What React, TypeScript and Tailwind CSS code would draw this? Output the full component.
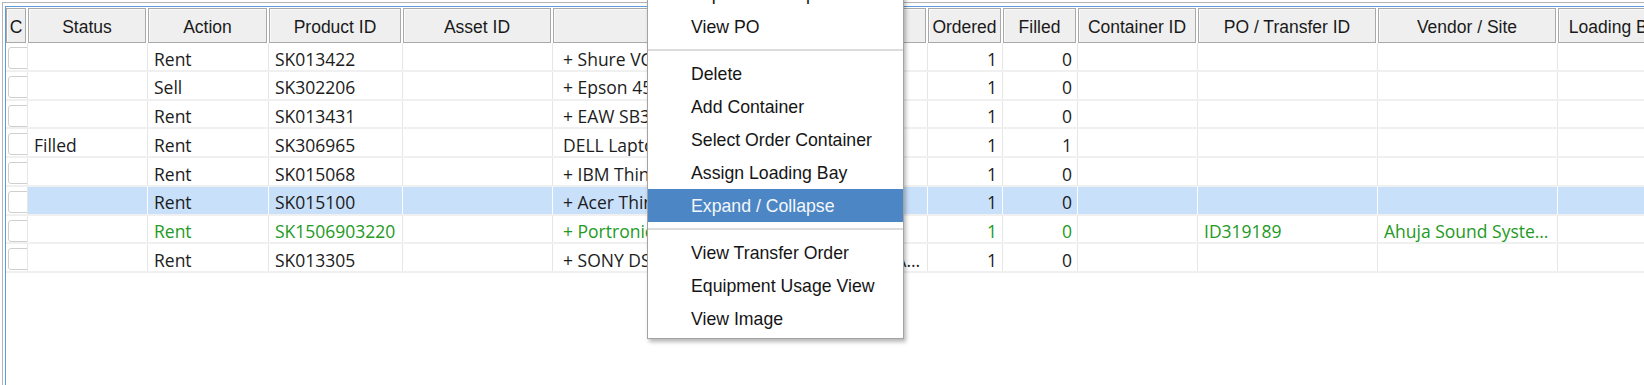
import React from "react";

interface Column {
  key: string;
  label: string;
  width: string;
  right?: boolean;
}

interface OrderRow {
  status?: string;
  action: string;
  product: string;
  description: string;
  descTail?: string;
  ordered: number;
  filled: number;
  po?: string;
  vendor?: string;
  green?: boolean;
  selected?: boolean;
}

const columns: Column[] = [
  { key: "c", label: "C", width: "w-[22px]" },
  { key: "status", label: "Status", width: "w-[120px]" },
  { key: "action", label: "Action", width: "w-[121px]" },
  { key: "product", label: "Product ID", width: "w-[134px]" },
  { key: "asset", label: "Asset ID", width: "w-[150px]" },
  { key: "desc", label: "Description", width: "w-[375px]" },
  { key: "ordered", label: "Ordered", width: "w-[75px]", right: true },
  { key: "filled", label: "Filled", width: "w-[75px]", right: true },
  { key: "container", label: "Container ID", width: "w-[120px]" },
  { key: "po", label: "PO / Transfer ID", width: "w-[180px]" },
  { key: "vendor", label: "Vendor / Site", width: "w-[180px]" },
  { key: "bay", label: "Loading Bay", width: "w-[121px]" },
];

const rows: OrderRow[] = [
  { action: "Rent", product: "SK013422", description: "+ Shure VC-24 Wireless Microphone Kit", ordered: 1, filled: 0 },
  { action: "Sell", product: "SK302206", description: "+ Epson 4500 Lumens Projector", ordered: 1, filled: 0 },
  { action: "Rent", product: "SK013431", description: "+ EAW SB330 Subwoofer", ordered: 1, filled: 0 },
  { status: "Filled", action: "Rent", product: "SK306965", description: "DELL Laptop Latitude E6410", ordered: 1, filled: 1 },
  { action: "Rent", product: "SK015068", description: "+ IBM ThinkPad T420 Laptop", ordered: 1, filled: 0 },
  { action: "Rent", product: "SK015100", description: "+ Acer Thin Client Veriton N", ordered: 1, filled: 0, selected: true },
  {
    action: "Rent",
    product: "SK1506903220",
    description: "+ Portronics Bluetooth Speaker",
    ordered: 1,
    filled: 0,
    po: "ID319189",
    vendor: "Ahuja Sound Systems Pvt Ltd",
    green: true,
  },
  {
    action: "Rent",
    product: "SK013305",
    description: "+ SONY DSC-HX400V Digital Camera Kit with Tripod and Memory Card",
    descTail: "A…",
    ordered: 1,
    filled: 0,
  },
];

type MenuEntry = { label: string; active?: boolean } | "sep";

const menu: MenuEntry[] = [
  { label: "Expand / Collapse All" },
  { label: "View PO" },
  "sep",
  { label: "Delete" },
  { label: "Add Container" },
  { label: "Select Order Container" },
  { label: "Assign Loading Bay" },
  { label: "Expand / Collapse", active: true },
  "sep",
  { label: "View Transfer Order" },
  { label: "Equipment Usage View" },
  { label: "View Image" },
];

const cellValue = (row: OrderRow, key: string) => {
  switch (key) {
    case "status":
      return row.status ?? "";
    case "action":
      return row.action;
    case "product":
      return row.product;
    case "ordered":
      return String(row.ordered);
    case "filled":
      return String(row.filled);
    case "po":
      return row.po ?? "";
    case "vendor":
      return row.vendor ?? "";
    default:
      return "";
  }
};

const ContextMenu = () => (
  <div className="absolute left-[647px] top-[-27px] w-[257px] border border-[#a3a3a3] bg-white py-[3px] shadow-[2px_3px_4px_rgba(0,0,0,0.28)] font-['Liberation_Sans',Arial,sans-serif] text-[17.7px]">
    {menu.map((item, i) =>
      item === "sep" ? (
        <div key={i} className="flex h-[14px] items-center">
          <div className="h-[2px] w-full bg-[#dcdcdc]" />
        </div>
      ) : (
        <div
          key={i}
          className={
            item.active
              ? "flex h-[33px] items-center bg-[#4d86c4] pl-[43px] pt-[2px] text-[#f4f7fb]"
              : "flex h-[33px] items-center pl-[43px] pt-[2px] text-[#151515]"
          }
        >
          {item.label}
        </div>
      )
    )}
  </div>
);

export default function App() {
  return (
    <div className="relative h-[385px] w-[1644px] overflow-hidden bg-white pl-[2px] pt-[2px]">
      <div className="h-full border-l border-t border-[#b4b4b4] pl-[2px] pt-[3px]">
        <div className="h-full border-l border-t border-[#5d9ad6] pt-[1px]">
          {/* header */}
          <div className="flex h-[35px] font-['Liberation_Sans',Arial,sans-serif] text-[17.5px] text-[#1a1a1a]">
            {columns.map((col) => (
              <div key={col.key} className={`${col.width} h-full shrink-0 pr-[2px]`}>
                <div className="flex h-full items-center justify-center overflow-hidden whitespace-nowrap border border-[#a9a9a9] bg-[#efefef] pt-[3px] shadow-[inset_1px_1px_0_#fafafa]">
                  {col.key === "desc" ? "" : col.label}
                </div>
              </div>
            ))}
          </div>

          {/* rows */}
          <div className="font-['Open_Sans','Noto_Sans',sans-serif] text-[17.5px] leading-[22px]">
            {rows.map((row, r) => (
              <div key={r} className="flex h-[28.75px] border-b-2 border-[#f0f0f0]">
                {columns.map((col) => {
                  if (col.key === "c") {
                    return (
                      <div key={col.key} className={`${col.width} shrink-0 overflow-hidden border-r border-[#e6e6e6] bg-white pl-[2px] pt-[4px]`}>
                        <div className="h-[22px] w-[26px] rounded-[3px] border border-[#cfcfcf] bg-white" />
                      </div>
                    );
                  }
                  const base = row.selected ? "bg-[#c8e0fa] border-white" : "bg-white border-[#e6e6e6]";
                  const color = row.green ? "text-[#239a23]" : "text-[#1c1c1c]";
                  if (col.key === "desc") {
                    return (
                      <div key={col.key} className={`${col.width} ${base} ${color} flex shrink-0 items-start overflow-hidden whitespace-nowrap border-r pl-[10px] pr-[7px] pt-[4.5px]`}>
                        <span className="min-w-0 flex-1 overflow-hidden">{row.description}</span>
                        {row.descTail && <span className="shrink-0">{row.descTail}</span>}
                      </div>
                    );
                  }
                  return (
                    <div
                      key={col.key}
                      className={`${col.width} ${base} ${color} flex shrink-0 items-start overflow-hidden whitespace-nowrap border-r pt-[4.5px] ${
                        col.right ? "justify-end pr-[5px]" : "pl-[6px] pr-[4px]"
                      }`}
                    >
                      <span className="truncate">{cellValue(row, col.key)}</span>
                    </div>
                  );
                })}
              </div>
            ))}
          </div>
        </div>
      </div>

      <ContextMenu />
    </div>
  );
}
